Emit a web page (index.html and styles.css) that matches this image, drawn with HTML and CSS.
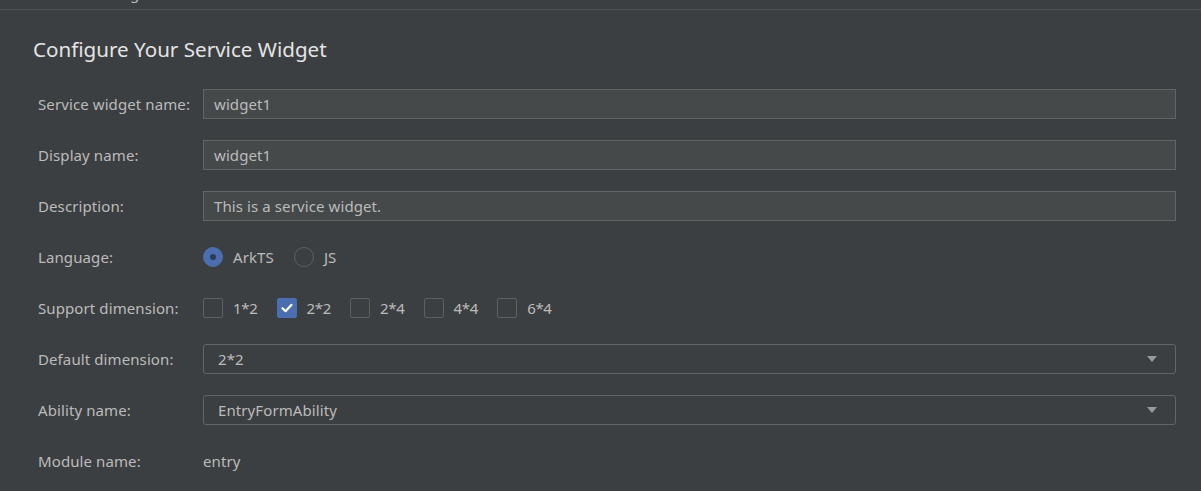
FILE: index.html
```html
<!DOCTYPE html>
<html>
<head>
<meta charset="utf-8">
<link rel="stylesheet" href="styles.css">
</head>
<body>
<div class="topbar"><span class="toptext">Service Widget</span></div>
<div class="page">
  <h1 class="title">Configure Your Service Widget</h1>
  <div class="form">
    <div class="row">
      <label class="label">Service widget name:</label>
      <div class="field input">widget1</div>
    </div>
    <div class="row">
      <label class="label">Display name:</label>
      <div class="field input">widget1</div>
    </div>
    <div class="row">
      <label class="label">Description:</label>
      <div class="field input">This is a service widget.</div>
    </div>
    <div class="row">
      <label class="label">Language:</label>
      <div class="options">
        <span class="opt"><span class="radio checked"></span><span class="opt-text">ArkTS</span></span>
        <span class="opt"><span class="radio"></span><span class="opt-text">JS</span></span>
      </div>
    </div>
    <div class="row">
      <label class="label">Support dimension:</label>
      <div class="options checks">
        <span class="opt"><span class="check"></span><span class="opt-text">1*2</span></span>
        <span class="opt"><span class="check checked"><svg width="14" height="12" viewBox="0 0 14 12"><path d="M2.5 6.2 L5.6 9.2 L11.5 2.8" fill="none" stroke="#ffffff" stroke-width="2.2" stroke-linecap="round" stroke-linejoin="round"/></svg></span><span class="opt-text">2*2</span></span>
        <span class="opt"><span class="check"></span><span class="opt-text">2*4</span></span>
        <span class="opt"><span class="check"></span><span class="opt-text">4*4</span></span>
        <span class="opt"><span class="check"></span><span class="opt-text">6*4</span></span>
      </div>
    </div>
    <div class="row">
      <label class="label">Default dimension:</label>
      <div class="field select"><span>2*2</span><span class="arrow"></span></div>
    </div>
    <div class="row">
      <label class="label">Ability name:</label>
      <div class="field select"><span>EntryFormAbility</span><span class="arrow"></span></div>
    </div>
    <div class="row">
      <label class="label">Module name:</label>
      <div class="plain">entry</div>
    </div>
  </div>
</div>
</body>
</html>
```
FILE: styles.css
```css
html, body {
  margin: 0;
  padding: 0;
  background: #3c3f41;
}
body {
  font-family: "Noto Sans", "Open Sans", "Liberation Sans", sans-serif;
  font-size: 15px;
  letter-spacing: 0.1px;
  color: #bbbbbb;
  width: 1201px;
  height: 491px;
  overflow: hidden;
}
.topbar {
  height: 9px;
  border-bottom: 1px solid #515151;
  overflow: hidden;
}
.toptext {
  display: block;
  padding-left: 48px;
  margin-top: -17px;
  line-height: 20px;
  font-size: 15px;
  color: #bbbbbb;
}
.page {
  padding: 0 25px 0 33px;
}
.title {
  margin: 0;
  padding-top: 25px;
  font-size: 20.6px;
  font-weight: normal;
  letter-spacing: 0;
  line-height: 28px;
  color: #e4e4e4;
  box-sizing: border-box;
  height: 79px;
}
.form {
  display: flex;
  flex-direction: column;
  gap: 21px;
  padding-left: 5px;
}
.row {
  display: flex;
  align-items: center;
  height: 30px;
}
.label {
  width: 165px;
  flex: none;
}
.field {
  flex: 1;
  height: 30px;
  box-sizing: border-box;
  border: 1px solid #646464;
  display: flex;
  align-items: center;
}
.input {
  background: #45494a;
  padding-left: 10px;
}
.select {
  border-radius: 3px;
  padding-left: 14px;
  padding-right: 18px;
  justify-content: space-between;
}
.arrow {
  width: 0;
  height: 0;
  border-left: 5px solid transparent;
  border-right: 5px solid transparent;
  border-top: 6px solid #9a9a9a;
}
.options {
  display: flex;
  align-items: center;
  gap: 20px;
}
.options.checks {
  gap: 19px;
}
.checks .opt-text {
  letter-spacing: -0.3px;
}
.opt {
  display: flex;
  align-items: center;
  gap: 10px;
}
.radio {
  width: 20px;
  height: 20px;
  box-sizing: border-box;
  border-radius: 50%;
  border: 1px solid #5e6060;
  background: #3c3f41;
  position: relative;
}
.radio.checked {
  background: #4a6eaf;
  border-color: #4a6eaf;
}
.radio.checked::after {
  content: "";
  position: absolute;
  left: 6px;
  top: 6px;
  width: 6px;
  height: 6px;
  border-radius: 50%;
  background: #2b3a58;
}
.check {
  width: 20px;
  height: 20px;
  box-sizing: border-box;
  border-radius: 2px;
  border: 1px solid #5e6060;
  display: flex;
  align-items: center;
  justify-content: center;
}
.check.checked {
  background: #4a6eaf;
  border-color: #4a6eaf;
}
.plain {
  padding-left: 0;
}
```
